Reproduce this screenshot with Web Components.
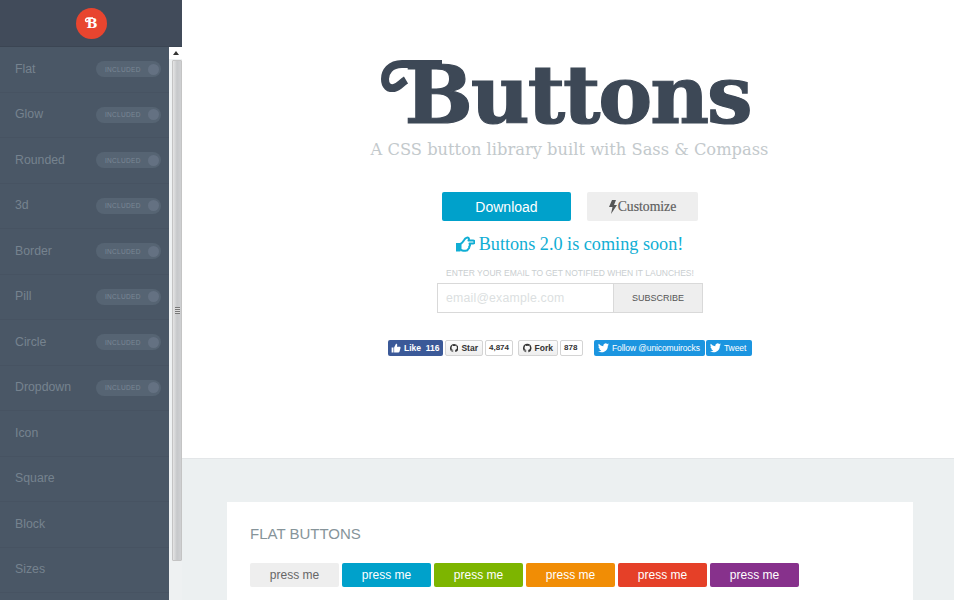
<!DOCTYPE html>
<html><head><meta charset="utf-8"><style>
html,body{margin:0;height:600px;overflow:hidden;background:#fff}
body{font-family:"Liberation Sans",Arial,sans-serif}
app-shell{height:600px}
</style></head><body>
<app-shell>
<side-bar slot="side">
<nav-item inc>Flat</nav-item><nav-item inc>Glow</nav-item><nav-item inc>Rounded</nav-item><nav-item inc>3d</nav-item><nav-item inc>Border</nav-item><nav-item inc>Pill</nav-item><nav-item inc>Circle</nav-item><nav-item inc>Dropdown</nav-item><nav-item>Icon</nav-item><nav-item>Square</nav-item><nav-item>Block</nav-item><nav-item>Sizes</nav-item>
</side-bar>
<hero-head></hero-head>
<demo-card title="FLAT BUTTONS"></demo-card>
</app-shell>
<script>
const def=(n,html,init)=>customElements.define(n,class extends HTMLElement{constructor(){super();this.attachShadow({mode:'open'}).innerHTML=html}connectedCallback(){init&&init.call(this)}});
def('app-shell',`<style>:host{display:flex;width:954px;overflow:hidden}
main{flex:1;min-width:0;height:600px;overflow:hidden;display:flex;flex-direction:column}
aside{flex:none;width:182px;height:600px}</style>
<aside><slot name="side"></slot></aside><main><slot></slot></main>`);

def('side-bar',`<style>:host{display:flex;flex-direction:column;width:182px;height:600px;background:#4a5766;overflow:hidden}
header{flex:none;background:#414b5a;display:flex;align-items:center;justify-content:center;border-bottom:1px solid #3b4553;box-sizing:border-box;height:47px}
.logo{position:relative;width:31px;height:31px;border-radius:50%;background:#e8452f;color:#fff;font:bold 13px "DejaVu Serif",serif;display:flex;align-items:center;justify-content:center;padding-left:2px;box-sizing:border-box}
.logo svg{position:absolute;left:8px;top:9px}
.body{flex:1;display:flex;min-height:0}
.list{flex:none;width:169px;overflow:hidden;background:#4a5766}
.bar{flex:none;width:13px;background:#eef1f2;box-sizing:border-box;display:flex;flex-direction:column;align-items:flex-end}
.arrow{height:12px;flex:none;width:100%;background:#fff;display:flex;align-items:center;justify-content:center}
.arrow i{width:0;height:0;border:3px solid transparent;border-bottom:4px solid #333;border-top:0}
.thumb{width:10px;height:501px;margin-top:1px;background:linear-gradient(90deg,#e4e4e4,#c6c8ca 50%,#cfd0d2);border:1px solid #c4c4c4;box-sizing:border-box;border-radius:1px;display:flex;align-items:center;justify-content:center;flex:none}
.grip{width:5px;height:7px;background:repeating-linear-gradient(180deg,#777 0 1px,#ddd 1px 2px)}
</style>
<header><div class="logo"><svg width="10" height="8" viewBox="0 0 10 8" fill="none" stroke="#fff" stroke-width="1.500"><path d="M9 1H4C1.500 1 .8 4 2.500 4.500 3.500 4.800 4 4 4.500 3.500"/></svg>B</div></header>
<div class="body"><div class="list"><slot></slot></div>
<div class="bar"><div class="arrow"><i></i></div><div class="thumb"><div class="grip"></div></div></div></div>`);

def('nav-item',`<style>:host{display:flex;align-items:center;justify-content:space-between;box-sizing:border-box;height:45.5px;padding:0 8px 1px 15px;border-bottom:1px solid #475362;color:#76838f;font:12.300px "Liberation Sans",Arial,sans-serif}
.pill{display:none;width:65px;height:16px;border-radius:8px;background:#566473;box-sizing:border-box;align-items:center;justify-content:space-between;padding:0 2px 0 9px;color:#7b8895;font-size:6.500px;letter-spacing:.3px;margin-top:1px}
:host([inc]) .pill{display:flex}
.pill i{width:11px;height:11px;border-radius:50%;background:#647182}
</style><slot></slot><span class="pill">INCLUDED<i></i></span>`);

const fa='<svg viewBox="0 0 16 16" width="10" height="10" fill="#fff"><path d="M1 7h3v8H1zM5 7l3-6c1.500 0 2 1 2 2l-.5 3H14c1 0 1.500 1 1.200 2l-1.500 5.500c-.2 1-1 1.500-2 1.500H5z"/></svg>';
const gh='<svg viewBox="0 0 16 16" width="12" height="12" fill="#333"><path d="M8 .2a8 8 0 0 0-2.500 15.600c.4.100.5-.2.500-.4v-1.400c-2.200.5-2.700-1-2.700-1-.4-.9-.9-1.200-.9-1.200-.7-.5.100-.5.100-.5.800.1 1.200.8 1.200.8.700 1.200 1.900.9 2.300.7.100-.5.300-.9.500-1.100-1.800-.2-3.600-.9-3.600-4 0-.9.300-1.600.8-2.100-.1-.2-.4-1 .1-2.100 0 0 .7-.2 2.200.8a7.600 7.600 0 0 1 4 0c1.500-1 2.200-.8 2.200-.8.400 1.100.2 1.900.1 2.100.5.600.8 1.300.8 2.100 0 3.100-1.900 3.700-3.700 3.900.3.300.6.800.6 1.500v2.200c0 .2.100.5.600.4A8 8 0 0 0 8 .2z"/></svg>';
const tw='<svg viewBox="0 0 16 16" width="11" height="11" fill="#fff"><path d="M16 3.500c-.6.300-1.200.4-1.900.5.700-.4 1.200-1 1.400-1.800-.6.400-1.300.7-2.100.8a3.300 3.300 0 0 0-5.600 3A9.300 9.300 0 0 1 1.100 2.600a3.300 3.300 0 0 0 1 4.400c-.5 0-1-.2-1.500-.4 0 1.600 1.100 2.900 2.600 3.200-.5.100-1 .2-1.500.1.400 1.300 1.600 2.200 3.100 2.300A6.600 6.600 0 0 1 0 13.500 9.300 9.300 0 0 0 14.300 5.200c.7-.4 1.200-1 1.700-1.700z"/></svg>';

def('hero-head',`<style>:host{display:flex;flex-direction:column;align-items:center;flex:none;height:459px;box-sizing:border-box;border-bottom:1px solid #e3e6e8;background:#fff;padding-top:50px}
h1{margin:0 0 0 19px;height:90px;position:relative;font:bold 81px/90px "DejaVu Serif",serif;color:#3d4856;letter-spacing:-2.100px;-webkit-text-stroke:1.200px #3d4856;white-space:nowrap}
h1 svg{position:absolute;left:-27px;top:2px}
.sub{margin:0 0 0 3px;height:20px;font:16.300px/20px "DejaVu Serif",serif;color:#c3c9cc;white-space:nowrap}
.btns{display:flex;gap:16px;margin:32px 0 0 4px}
.dl{width:129px;height:29px;background:#00a1cb;border-radius:2px;color:#fff;font:14px/30px "Liberation Sans",Arial,sans-serif;text-align:center}
.cu{width:111px;height:29px;background:#eee;border-radius:2px;color:#5f5f5f;font:13.700px/30px "Liberation Serif",serif;-webkit-text-stroke:.2px #5f5f5f;display:flex;align-items:center;justify-content:center}
.cu svg{margin-right:1px}
h2{margin:11px 0 0 3px;height:24px;font:normal 18.200px/24px "Liberation Serif",serif;color:#10aed4;display:flex;align-items:center;gap:4px;white-space:nowrap}
.note{margin:12px 0 0 4px;height:11px;font:8.500px/11px "Liberation Sans",Arial,sans-serif;color:#c9ced0;white-space:nowrap}
form{display:flex;margin:4px 0 0 4px;height:30px}
.in{width:176px;height:30px;border:1px solid #d9d9d9;border-right:0;box-sizing:border-box;padding-left:8px;font:12.300px/28px "Liberation Sans",Arial,sans-serif;color:#dcdfe1;letter-spacing:.2px;background:#fff}
.sb{width:90px;height:30px;border:1px solid #d9d9d9;box-sizing:border-box;background:#eee;color:#555;font:9px/28px "Liberation Sans",Arial,sans-serif;text-align:center}
.soc{display:flex;align-items:center;height:17px;margin:26px 0 0 4px;font:bold 8.500px "Liberation Sans",Arial,sans-serif}
.b{height:16px;box-sizing:border-box;border-radius:2px;display:flex;align-items:center;gap:3px;padding:0 3px;white-space:nowrap}
.fb{background:#3b5998;color:#fff;width:55px}
.g{background:linear-gradient(#fcfcfc,#eee);border:1px solid #d4d4d4;color:#333;padding:0 4px}
.c{background:#fff;border:1px solid #d4d4d4;color:#333;padding:0 3px;font-size:8px}
.t{background:#1b95e0;color:#fff;font-weight:normal;padding:0 4px;height:16px;letter-spacing:-.1px}
</style>
<h1><svg width="70" height="40" viewBox="0 0 70 40" fill="none" stroke="#3d4856" stroke-width="8"><path d="M65 12H25C13 12 8 20 8 27 8 34 12 37 17 36 22 35 24 31 29 28"/></svg>Buttons</h1>
<p class="sub">A CSS button library built with Sass &amp; Compass</p>
<div class="btns"><div class="dl">Download</div><div class="cu"><svg width="8" height="14" viewBox="0 0 8 14" fill="#555"><path d="M3 0h4L5 5h3L2 14l1.500-7H0z"/></svg>Customize</div></div>
<h2><svg width="19" height="16" viewBox="0 0 19 16" fill="none" stroke="#10aed4" stroke-width="2" stroke-linejoin="round"><path fill="#10aed4" stroke="none" d="M0 7h4.500v8.500H0z"/><path d="M4.500 8c2-1 3-3 4-4.500.8-1.500 3-2.500 4-1.500.7.700.5 1.500 0 2.500H17c2 0 2 3 0 3h-3.500c.5 1 .5 2.500-.3 3 .3 1.200-.2 2-1 2.500-.3 1.200-1.200 1.800-2.700 1.800H7.500c-1.500 0-2-.6-3-1.300z"/></svg>Buttons 2.0 is coming soon!</h2>
<p class="note">ENTER YOUR EMAIL TO GET NOTIFIED WHEN IT LAUNCHES!</p>
<form><div class="in">email@example.com</div><div class="sb">SUBSCRIBE</div></form>
<div class="soc">
<div class="b fb">${fa}<span>Like&nbsp;&nbsp;116</span></div>
<div class="b g" style="margin-left:2px;width:38px">${gh}Star</div>
<div class="b c" style="margin-left:2px;width:28px">4,874</div>
<div class="b g" style="margin-left:5px;width:40px">${gh}Fork</div>
<div class="b c" style="margin-left:2px;width:23px">878</div>
<div class="b t" style="margin-left:11px;width:111px">${tw}Follow @unicomuirocks</div>
<div class="b t" style="margin-left:1px;width:46px">${tw}Tweet</div>
</div>`);

def('demo-card',`<style>:host{display:block;flex:1;background:#ecf0f1;padding:43px 41px 0 45px}
.card{background:#fff;height:200px;box-sizing:border-box;padding:22px 23px}
h3{margin:0;font:normal 15px/20px "Liberation Sans",Arial,sans-serif;color:#86949a;height:20px}
.row{display:flex;gap:3px;margin-top:19px}
.p{width:89px;height:24px;border-radius:2px;color:#fff;font:12px/24px "Liberation Sans",Arial,sans-serif;text-align:center}
</style><div class="card"><h3>FLAT BUTTONS</h3><div class="row">
<div class="p" style="background:#eee;color:#666">press me</div>
<div class="p" style="background:#00a1cb">press me</div>
<div class="p" style="background:#7db500">press me</div>
<div class="p" style="background:#f18d05">press me</div>
<div class="p" style="background:#e54028">press me</div>
<div class="p" style="background:#87318c">press me</div>
</div></div>`);
</script>
</body></html>
